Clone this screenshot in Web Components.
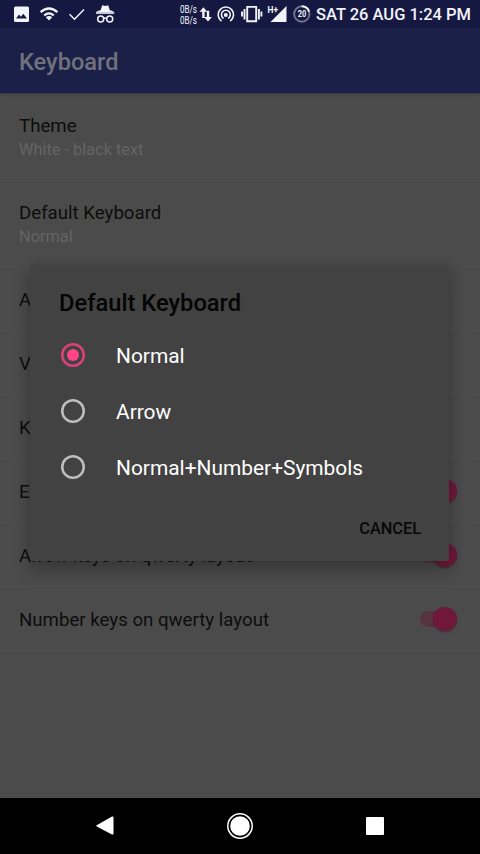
<!DOCTYPE html>
<html lang="en">
<head>
<meta charset="utf-8">
<title>Keyboard settings</title>
<style>
html,body{margin:0;height:100%;background:#000;overflow:hidden}
body{font-family:Roboto,"Liberation Sans",sans-serif}
</style>
</head>
<body>
<keyboard-screen></keyboard-screen>
<script>
function define(name, html) {
  const template = document.createElement('template');
  template.innerHTML = html;
  customElements.define(name, class extends HTMLElement {
    constructor() {
      super();
      this.attachShadow({mode: 'open'}).append(template.content.cloneNode(true));
    }
  });
}

define('status-bar', `
<style>
:host{display:flex;height:28px;flex:none;align-items:center;background:#151942;color:#f3f3fa;box-sizing:border-box;padding:0 9px 0 12px;justify-content:space-between}
div{display:flex;align-items:center}
svg{display:block;flex:none;fill:currentColor}
.rate{display:block;width:18px;font-size:10px;line-height:11px;white-space:nowrap;padding-top:1px}
.rate span{display:block;transform:scaleX(.8);transform-origin:0 0}
.clock{font-weight:500;font-size:16.500px;line-height:28px;white-space:nowrap;padding-top:2px;margin-left:1px;width:155px}
text{font-family:Roboto,sans-serif;font-weight:700}
</style>
<div>
<svg width="110" height="28" viewBox="0 0 110 28">
 <path fill-rule="evenodd" d="M3.500 6.500h12q1.500 0 1.500 1.500v12.500q0 1.500-1.500 1.500h-12q-1.500 0-1.500-1.500V8q0-1.500 1.500-1.500M4 18.500h11l-3.700-4.700-2.500 3-1.700-2.200z"/>
 <g fill="none" stroke="currentColor" stroke-width="2.300"><path d="M28.600 12.200Q37 4.800 45.400 12.200M32.200 15.500Q37 11.300 41.800 15.500"/></g><path d="M33.800 17.300Q37 14.700 40.200 17.300L37 20.500z"/>
 <path fill="none" stroke="currentColor" stroke-width="1.500" d="M57.500 14.200l5 5L72 9.500"/>
 <path d="M88.500 10.500l1.700-5.300 3 .8 3-.8 1.700 5.300zM84 12h18.200l-3-1.500H87z"/><path d="M84 12.200h18.200v1.600H84z"/>
 <g fill="none" stroke="currentColor" stroke-width="1.500"><circle cx="88.700" cy="18.900" r="3"/><circle cx="97.700" cy="18.900" r="3"/><path d="M91.600 18.600q1.600-1 3.200 0"/></g>
</svg>
</div>
<div>
<div class="rate"><span>0B/s</span><span>0B/s</span></div>
<svg width="117" height="28" viewBox="198 0 117 28">
 <path d="M203.400 7.300l3.900 4.500h-2.700v6.200h-2.400v-6.200h-2.700zM208 21.400l-3.900-4.500h2.700v-6.200h2.400v6.200h2.700z"/>
 <g fill="none" stroke="currentColor" stroke-width="1.600"><path d="M221.500 21.100A7.700 7.700 0 1 1 230.200 21.100M223.600 18.400A4.400 4.400 0 1 1 228.100 18.400"/></g><circle cx="225.800" cy="15" r="2"/>
 <path fill="none" stroke="currentColor" stroke-width="1.900" d="M247.200 6.900h9v14.400h-9zM244.500 9v10.500M258.900 9v10.500M242 11.500v5M261.400 11.500v5"/>
 <path d="M286.500 6v16h-16z"/><text x="267.500" y="12.500" font-size="9" textLength="10.500" lengthAdjust="spacingAndGlyphs" stroke="#151942" stroke-width="1.200" paint-order="stroke">H+</text>
 <circle cx="301.800" cy="14" r="7.700" fill="none" stroke="#73758f" stroke-width="1.900"/><path d="M301.800 6.300A7.700 7.700 0 0 1 309.100 11.600" fill="none" stroke="currentColor" stroke-width="1.900"/><text x="302" y="17.100" font-size="8.500" text-anchor="middle" textLength="8.500" lengthAdjust="spacingAndGlyphs">20</text>
</svg>
<div class="clock">SAT 26 AUG 1:24 PM</div>
</div>`);

define('app-bar', `
<style>:host{display:flex;flex:none;align-items:center;height:66px;box-sizing:border-box;padding:2px 19px 0;background:#1a2048;color:#71717c;font-weight:500;font-size:23.600px;border-bottom:1px solid #383b49;box-shadow:0 1px 2px #434343}</style><slot></slot>`);

define('setting-row', `
<style>
:host{display:flex;flex:none;height:64px;box-sizing:border-box;align-items:center;justify-content:space-between;padding:0 23px 0 19px;border-bottom:1px solid #4f4f4f;color:#0d0d0d;font-size:18.670px;line-height:24px}
:host([tall]){height:86px}
div{padding-top:2px}
:host([tall]) div{padding-top:1px}
::slotted([slot=summary]){display:block;color:#646464;font-size:16.330px;line-height:22px;margin-top:1px}
</style><div><slot></slot><slot name="summary"></slot></div><slot name="end"></slot>`);

define('toggle-switch', `
<style>:host{display:flex;width:38px;height:24px;align-items:center;justify-content:flex-end;position:relative}
b{position:absolute;left:1px;top:4px;width:32px;height:16px;border-radius:8px;background:#57333f}
span{position:relative;width:24px;height:24px;border-radius:50%;background:#711838;box-shadow:0 1px 2px #0005}</style><b></b><span></span>`);

define('radio-option', `
<style>
:host{display:flex;height:56px;align-items:center;padding-left:31px;gap:31px;color:#fff;font-size:20.900px}
i{width:24px;height:24px;color:#bdbdbd;box-shadow:inset 0 0 0 2.500px currentColor;border-radius:50%;display:grid;place-items:center;flex:none}
span{padding-top:2px}
:host([checked]) i{color:#dc4178}
:host([checked]) i::after{content:"";width:12px;height:12px;border-radius:50%;background:#ff4585}
</style><i></i><span><slot></slot></span>`);

define('choice-dialog', `
<style>
:host{display:block;box-sizing:border-box;width:419px;height:296px;background:#424242;border-radius:2px;box-shadow:0 10px 18px rgba(0,0,0,.2),0 2px 14px rgba(0,0,0,.13)}
.title{padding:21px 29px 0;height:41px;font-size:23.700px;line-height:34px;font-weight:500;color:#050505}
.actions{display:flex;justify-content:flex-end;padding:21px 28px 0;font-size:16.330px;line-height:25px;font-weight:500;color:#080808}
</style><div class="title"><slot name="title"></slot></div><slot></slot><div class="actions"><slot name="action"></slot></div>`);

define('nav-bar', `
<style>:host{display:grid;grid-template-columns:repeat(3,135px);justify-content:center;place-items:center;height:56px;flex:none;background:#000}svg{display:block;fill:#fff}</style>
<svg width="28" height="28" viewBox="0 0 28 28"><path d="M5.700 13.300L21 4.600q1.500-.7 1.500.8v16.200q0 1.500-1.500.8L5.700 14.500q-1-.6 0-1.200"/></svg>
<svg width="28" height="28" viewBox="0 0 28 28"><circle cx="14" cy="14" r="12.200" fill="none" stroke="#fff" stroke-width="1.500"/><circle cx="14" cy="14" r="9.800"/></svg>
<svg width="28" height="28" viewBox="0 0 28 28"><rect x="5" y="5" width="18" height="18" rx="1"/></svg>`);

define('keyboard-screen', `
<style>
:host{display:flex;flex-direction:column;width:480px;height:854px;background:#4b4b4b;position:relative;overflow:hidden}
main{flex:1;display:flex;flex-direction:column;min-height:0}
setting-row[tall]{padding-top:1px}
setting-row:first-child{height:87px;padding-top:0}
choice-dialog{position:absolute;left:30px;top:265px}
</style>
<status-bar></status-bar><app-bar>Keyboard</app-bar>
<main>
<setting-row tall>Theme<span slot="summary">White - black text</span></setting-row>
<setting-row tall>Default Keyboard<span slot="summary">Normal</span></setting-row>
<setting-row>A</setting-row>
<setting-row>V</setting-row>
<setting-row>Ke</setting-row>
<setting-row>En<toggle-switch slot="end"></toggle-switch></setting-row>
<setting-row>Arrow keys on qwerty layout<toggle-switch slot="end"></toggle-switch></setting-row>
<setting-row>Number keys on qwerty layout<toggle-switch slot="end"></toggle-switch></setting-row>
</main>
<nav-bar></nav-bar>
<choice-dialog><span slot="title">Default Keyboard</span>
<radio-option checked>Normal</radio-option><radio-option>Arrow</radio-option><radio-option>Normal+Number+Symbols</radio-option>
<span slot="action">CANCEL</span></choice-dialog>`);
</script>
</body>
</html>
